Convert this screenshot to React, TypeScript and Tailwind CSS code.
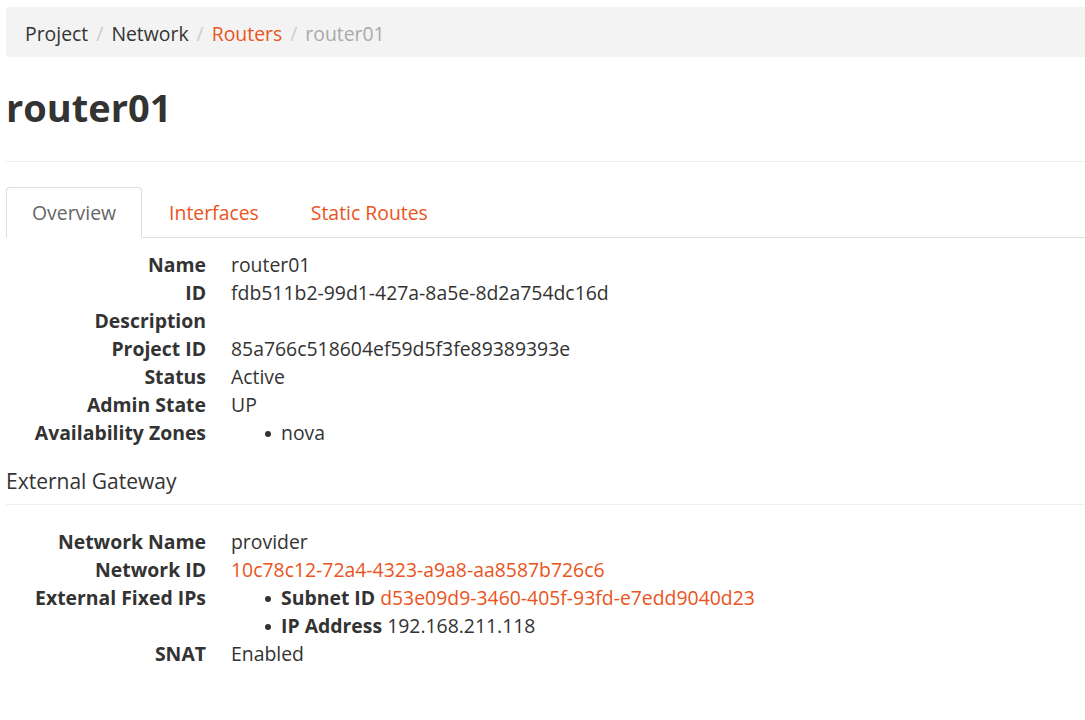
const font = { fontFamily: '"Open Sans", "Noto Sans", sans-serif' };

type Row = { label: string; value: React.ReactNode };

const DetailList = ({ rows }: { rows: Row[] }) => (
    <dl className="flex flex-col">
        {rows.map((r) => (
            <div key={r.label} className="flex items-start leading-[28px]">
                <dt className="w-[200px] shrink-0 text-right font-bold text-[#333]">{r.label}</dt>
                <dd className="pl-[25px] text-[#333]">{r.value}</dd>
            </div>
        ))}
    </dl>
);

const Bullets = ({ items }: { items: React.ReactNode[] }) => (
    <ul className="flex flex-col pl-[50px]">
        {items.map((it, i) => (
            <li key={i} className="relative">
                <span className="absolute -left-[16px] top-[12px] w-[6px] h-[6px] rounded-full bg-[#333]" />
                {it}
            </li>
        ))}
    </ul>
);

export default function App() {
    const link = 'text-[#e95420]';
    return (
        <div className="min-h-[720px] bg-white pl-[6px] pt-[7px] text-[19.4px] text-[#333]" style={font}>
            <nav className="flex items-center h-[50px] pl-[19px] pt-[3px] bg-[#f3f3f3] rounded-l-[4px] text-[19.4px]">
                <span className="text-[#333]">Project</span>
                <span className="px-[8px] text-[#ccc]">/</span>
                <span className="text-[#333]">Network</span>
                <span className="px-[8px] text-[#ccc]">/</span>
                <span className={link}>Routers</span>
                <span className="px-[8px] text-[#ccc]">/</span>
                <span className="text-[#aaa]">router01</span>
            </nav>

            <h1 className="mt-[26px] text-[38px] font-bold leading-[48px] text-[#333]">router01</h1>
            <hr className="mt-[30px] border-t border-[#eee]" />

            <div className="mt-[25px] flex border-b border-[#ddd]">
                <div className="-mb-px h-[51px] flex items-center px-[25px] pt-[1px] border border-[#ddd] border-b-white rounded-t-[4px] bg-white text-[#666]">
                    Overview
                </div>
                <div className={`ml-[2px] h-[50px] flex items-center px-[25px] pt-[1px] ${link}`}>Interfaces</div>
                <div className={`ml-[2px] h-[50px] flex items-center px-[25px] pt-[1px] ${link}`}>Static Routes</div>
            </div>

            <div className="mt-[13px]">
                <DetailList
                    rows={[
                        { label: 'Name', value: 'router01' },
                        { label: 'ID', value: 'fdb511b2-99d1-427a-8a5e-8d2a754dc16d' },
                        { label: 'Description', value: '' },
                        { label: 'Project ID', value: '85a766c518604ef59d5f3fe89389393e' },
                        { label: 'Status', value: 'Active' },
                        { label: 'Admin State', value: 'UP' },
                        { label: 'Availability Zones', value: <Bullets items={['nova']} /> },
                    ]}
                />
            </div>

            <h4 className="mt-[19px] text-[21px] leading-[30px] text-[#333]">External Gateway</h4>
            <hr className="mt-[8px] border-t border-[#eee]" />

            <div className="mt-[23px]">
                <DetailList
                    rows={[
                        { label: 'Network Name', value: 'provider' },
                        {
                            label: 'Network ID',
                            value: <span className={link}>10c78c12-72a4-4323-a9a8-aa8587b726c6</span>,
                        },
                        {
                            label: 'External Fixed IPs',
                            value: (
                                <Bullets
                                    items={[
                                        <>
                                            <b>Subnet ID</b>{' '}
                                            <span className={link}>d53e09d9-3460-405f-93fd-e7edd9040d23</span>
                                        </>,
                                        <>
                                            <b>IP Address</b> 192.168.211.118
                                        </>,
                                    ]}
                                />
                            ),
                        },
                        { label: 'SNAT', value: 'Enabled' },
                    ]}
                />
            </div>
        </div>
    );
}
